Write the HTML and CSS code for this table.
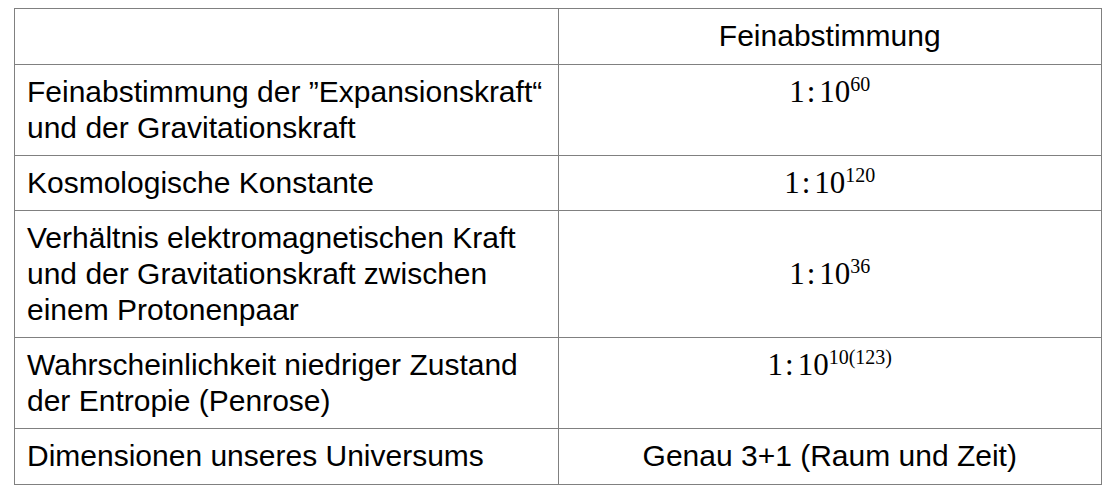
FILE: index.html
```html
<!DOCTYPE html>
<html lang="de">
<head>
<meta charset="utf-8">
<title>Feinabstimmung</title>
<link rel="stylesheet" href="styles.css">
</head>
<body>
<table class="tuning">
  <colgroup><col class="col"><col class="col"></colgroup>
  <tr class="single">
    <th class="label"></th>
    <th class="value">Feinabstimmung</th>
  </tr>
  <tr>
    <td class="label">Feinabstimmung der ”Expansionskraft“ und der Gravitationskraft</td>
    <td class="value top"><span class="math">1<span class="rel">:</span>10<sup>60</sup></span></td>
  </tr>
  <tr>
    <td class="label">Kosmologische Konstante</td>
    <td class="value"><span class="math">1<span class="rel">:</span>10<sup>120</sup></span></td>
  </tr>
  <tr>
    <td class="label">Verhältnis elektromagnetischen Kraft und der Gravitationskraft zwischen einem Protonenpaar</td>
    <td class="value"><span class="math">1<span class="rel">:</span>10<sup>36</sup></span></td>
  </tr>
  <tr>
    <td class="label">Wahrscheinlichkeit niedriger Zustand der Entropie (Penrose)</td>
    <td class="value top"><span class="math">1<span class="rel">:</span>10<sup>10(123)</sup></span></td>
  </tr>
  <tr class="single">
    <td class="label">Dimensionen unseres Universums</td>
    <td class="value">Genau 3+1 (Raum und Zeit)</td>
  </tr>
</table>
</body>
</html>
```

FILE: styles.css
```css
html, body {
  margin: 0;
  padding: 0;
  background: #ffffff;
}

body {
  font-family: "Liberation Sans", Arial, sans-serif;
  color: #000000;
}

.tuning {
  margin: 8px 0 0 14px;
  width: 1088px;
  border-collapse: collapse;
  table-layout: fixed;
}

.col {
  width: 50%;
}

.tuning th,
.tuning td {
  border: 1px solid #808080;
  padding: 9px 12px 9px 12px;
  font-size: 30px;
  line-height: 36px;
  font-weight: normal;
  vertical-align: middle;
}

.tuning .single th,
.tuning .single td {
  padding-bottom: 10px;
}

.label {
  text-align: left;
}

.value {
  text-align: center;
}

.tuning td.top {
  vertical-align: top;
}

.math {
  font-family: "Liberation Serif", "Times New Roman", serif;
  font-size: 31px;
}

.rel {
  margin: 0 4px 0 2px;
}

.math sup {
  font-size: 20px;
  line-height: 0;
  vertical-align: 11px;
}
```
